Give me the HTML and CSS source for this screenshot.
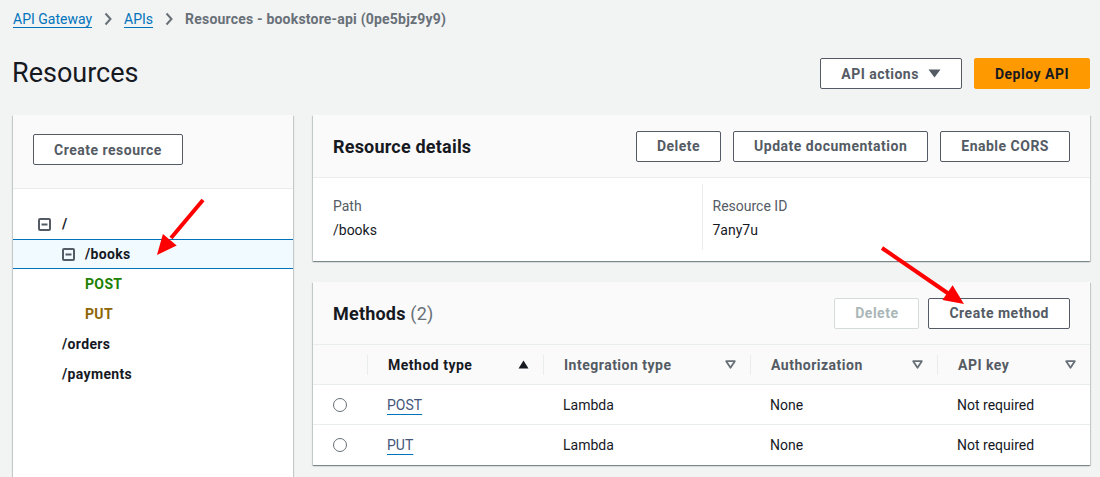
FILE: index.html
```html
<!DOCTYPE html>
<html lang="en">
<head>
<meta charset="utf-8">
<title>Resources - bookstore-api</title>
<link rel="stylesheet" href="styles.css">
</head>
<body>
<div class="page">
  <nav class="crumbs">
    <a href="#" class="crumb-link">API Gateway</a>
    <svg class="chev" width="8" height="14" viewBox="0 0 8 14"><polyline points="1.5,1.5 6.5,7 1.5,12.5" fill="none" stroke="#687078" stroke-width="2"/></svg>
    <a href="#" class="crumb-link">APIs</a>
    <svg class="chev" width="8" height="14" viewBox="0 0 8 14"><polyline points="1.5,1.5 6.5,7 1.5,12.5" fill="none" stroke="#687078" stroke-width="2"/></svg>
    <span class="crumb-current">Resources - bookstore-api (0pe5bjz9y9)</span>
  </nav>

  <div class="head">
    <h1>Resources</h1>
    <div class="head-actions">
      <button class="btn">API actions
        <svg class="caret" width="13" height="9" viewBox="0 0 13 9"><polygon points="0.5,0.5 12.5,0.5 6.5,8.5" fill="#545b64"/></svg>
      </button>
      <button class="btn btn-primary">Deploy API</button>
    </div>
  </div>

  <div class="layout">
    <aside class="tree-panel">
      <div class="tree-head">
        <button class="btn">Create resource</button>
      </div>
      <ul class="tree">
        <li class="node lvl0">
          <svg class="toggle" width="13" height="13" viewBox="0 0 13 13"><rect x="1" y="1" width="11" height="11" rx="1" fill="none" stroke="#545b64" stroke-width="2"/><line x1="3.5" y1="6.5" x2="9.5" y2="6.5" stroke="#545b64" stroke-width="2"/></svg>
          <span>/</span>
        </li>
        <li class="node lvl1 selected">
          <svg class="toggle" width="13" height="13" viewBox="0 0 13 13"><rect x="1" y="1" width="11" height="11" rx="1" fill="none" stroke="#545b64" stroke-width="2"/><line x1="3.5" y1="6.5" x2="9.5" y2="6.5" stroke="#545b64" stroke-width="2"/></svg>
          <span>/books</span>
        </li>
        <li class="node lvl2 m-post"><span>POST</span></li>
        <li class="node lvl2 m-put"><span>PUT</span></li>
        <li class="node lvl1 leaf"><span>/orders</span></li>
        <li class="node lvl1 leaf"><span>/payments</span></li>
      </ul>
    </aside>

    <main class="main">
      <section class="panel">
        <header class="panel-head">
          <h2>Resource details</h2>
          <div class="btn-row">
            <button class="btn">Delete</button>
            <button class="btn">Update documentation</button>
            <button class="btn">Enable CORS</button>
          </div>
        </header>
        <div class="details">
          <div class="kv">
            <div class="k">Path</div>
            <div class="v">/books</div>
          </div>
          <div class="kv kv-sep">
            <div class="k">Resource ID</div>
            <div class="v">7any7u</div>
          </div>
        </div>
      </section>

      <section class="panel">
        <header class="panel-head">
          <h2>Methods <span class="count">(2)</span></h2>
          <div class="btn-row btn-row-tight">
            <button class="btn btn-disabled">Delete</button>
            <button class="btn">Create method</button>
          </div>
        </header>
        <div class="table">
          <div class="th th-first"></div>
          <div class="th"><div class="th-in sorted"><span>Method type</span>
            <svg width="11" height="9" viewBox="0 0 11 9"><polygon points="5.5,0.5 10.5,8.5 0.5,8.5" fill="#16191f"/></svg></div></div>
          <div class="th"><div class="th-in"><span>Integration type</span>
            <svg width="11" height="9" viewBox="0 0 11 9"><polygon points="1.2,1.2 9.8,1.2 5.5,7.8" fill="none" stroke="#687078" stroke-width="1.8" stroke-linejoin="round"/></svg></div></div>
          <div class="th"><div class="th-in"><span>Authorization</span>
            <svg width="11" height="9" viewBox="0 0 11 9"><polygon points="1.2,1.2 9.8,1.2 5.5,7.8" fill="none" stroke="#687078" stroke-width="1.8" stroke-linejoin="round"/></svg></div></div>
          <div class="th"><div class="th-in"><span>API key</span>
            <svg width="11" height="9" viewBox="0 0 11 9"><polygon points="1.2,1.2 9.8,1.2 5.5,7.8" fill="none" stroke="#687078" stroke-width="1.8" stroke-linejoin="round"/></svg></div></div>

          <div class="td td-radio"><span class="radio"></span></div>
          <div class="td"><a href="#" class="mlink">POST</a></div>
          <div class="td">Lambda</div>
          <div class="td">None</div>
          <div class="td">Not required</div>

          <div class="td td-radio"><span class="radio"></span></div>
          <div class="td"><a href="#" class="mlink">PUT</a></div>
          <div class="td">Lambda</div>
          <div class="td">None</div>
          <div class="td">Not required</div>
        </div>
      </section>
    </main>
  </div>

  <svg class="annot" width="1100" height="477" viewBox="0 0 1100 477">
    <line x1="203" y1="200" x2="171" y2="238" stroke="#ff0000" stroke-width="4"/>
    <polygon points="157,255 162.9,233.9 176.7,245.5" fill="#ff0000"/>
    <line x1="882" y1="248" x2="949" y2="294" stroke="#ff0000" stroke-width="4"/>
    <polygon points="964,304 942.4,300.1 952.6,285.3" fill="#ff0000"/>
  </svg>
</div>
</body>
</html>
```

FILE: styles.css
```css
* { box-sizing: border-box; margin: 0; padding: 0; }

body {
  background: #f2f3f3;
  font-family: Roboto, "Noto Sans", "Liberation Sans", sans-serif;
  font-size: 14px;
  color: #16191f;
}

.page {
  position: relative;
  height: 477px;
  overflow: hidden;
  padding: 9px 10px 0 13px;
}

/* breadcrumbs */
.crumbs {
  display: flex;
  align-items: center;
  gap: 12px;
  height: 20px;
  line-height: 20px;
}
.crumb-link {
  color: #0073bb;
  text-decoration: underline;
  text-underline-offset: 3px;
}
.crumb-current {
  color: #687078;
  font-weight: 700;
  letter-spacing: 0.2px;
}
.chev { display: block; }

/* page header */
.head {
  margin-top: 29px;
  display: flex;
  justify-content: space-between;
  align-items: center;
  height: 31px;
}
h1 {
  font-size: 27px;
  font-weight: 400;
  line-height: 31px;
  color: #16191f;
  margin-left: -1px;
}
.head-actions {
  display: flex;
  gap: 12px;
}

/* buttons */
.btn {
  font-family: inherit;
  font-size: 14px;
  font-weight: 700;
  letter-spacing: 0.5px;
  color: #545b64;
  background: #fff;
  border: 1px solid #545b64;
  border-radius: 2px;
  height: 31px;
  padding: 0 20px;
  display: inline-flex;
  align-items: center;
  gap: 9px;
  white-space: nowrap;
  cursor: pointer;
}
.btn-primary {
  background: #ff9900;
  border-color: #ff9900;
  color: #16191f;
}
.btn-disabled {
  color: #aab7b8;
  border-color: #d5dbdb;
}
.caret { display: block; }

/* layout */
.layout {
  margin-top: 26px;
  display: flex;
  gap: 20px;
  align-items: flex-start;
}

.tree-panel {
  width: 280px;
  flex: none;
  height: 380px;
  background: #fff;
  box-shadow: 0 1px 1px 0 rgba(0, 28, 36, 0.3), 1px 1px 1px 0 rgba(0, 28, 36, 0.15), -1px 1px 1px 0 rgba(0, 28, 36, 0.15);
}
.tree-head {
  background: #fafafa;
  height: 74px;
  padding: 19px 20px 0;
  border-bottom: 1px solid #eaeded;
}
.tree {
  list-style: none;
  padding-top: 20px;
}
.node {
  height: 30px;
  display: flex;
  align-items: center;
  gap: 10px;
  font-weight: 700;
  letter-spacing: 0.35px;
  color: #16191f;
}
.node .toggle { display: block; flex: none; }
.lvl0 { padding-left: 25px; gap: 11px; }
.lvl1 { padding-left: 49px; }
.lvl2 { padding-left: 72px; }
.selected {
  background: #f1faff;
  border-top: 1px solid #0073bb;
  border-bottom: 1px solid #0073bb;
}
.m-post { color: #1d8102; }
.m-put { color: #8d6605; }

/* right column */
.main {
  flex: 1;
  display: flex;
  flex-direction: column;
  gap: 21px;
}
.panel {
  background: #fff;
  box-shadow: 0 1px 1px 0 rgba(0, 28, 36, 0.3), 1px 1px 1px 0 rgba(0, 28, 36, 0.15), -1px 1px 1px 0 rgba(0, 28, 36, 0.15);
}
.panel-head {
  background: #fafafa;
  height: 63px;
  padding: 0 20px;
  display: flex;
  align-items: center;
  justify-content: space-between;
  border-bottom: 1px solid #eaeded;
}
h2 {
  font-size: 18px;
  font-weight: 700;
  letter-spacing: 0.2px;
  color: #16191f;
}
.count {
  font-weight: 400;
  color: #687078;
}
.btn-row {
  display: flex;
  gap: 12px;
}
.btn-row-tight { gap: 9px; }

/* details */
.details {
  display: grid;
  grid-template-columns: 1fr 1fr;
  padding: 6px 20px 11px;
}
.kv {
  padding-top: 12px;
  height: 66px;
  line-height: 20px;
}
.kv-sep {
  border-left: 1px solid #eaeded;
  padding-left: 10px;
}
.k { color: #545b64; margin-bottom: 4px; }
.v { color: #16191f; }

/* table */
.table {
  display: grid;
  grid-template-columns: 54px 176px 207px 187px 1fr;
}
.th {
  height: 40px;
  background: #fafafa;
  border-bottom: 1px solid #eaeded;
  display: flex;
  align-items: center;
}
.th-in {
  flex: 1;
  height: 20px;
  border-left: 1px solid #eaeded;
  padding: 0 14px 0 20px;
  display: flex;
  align-items: center;
  justify-content: space-between;
  font-weight: 700;
  letter-spacing: 0.5px;
  color: #545b64;
}
.th-in svg { display: block; }
.th-in.sorted { color: #16191f; }

.td {
  height: 40px;
  display: flex;
  align-items: center;
  padding-left: 20px;
  color: #16191f;
  border-bottom: 1px solid #eaeded;
}
.table .td:nth-last-child(-n+5) { border-bottom: none; }
.radio {
  width: 14px;
  height: 14px;
  border: 1.5px solid #687078;
  border-radius: 50%;
  background: #fff;
}
.mlink {
  color: #44577a;
  text-decoration: underline;
  text-decoration-color: #0073bb;
  text-underline-offset: 4px;
}

/* annotations */
.annot {
  position: absolute;
  left: 0;
  top: 0;
  pointer-events: none;
}
```
